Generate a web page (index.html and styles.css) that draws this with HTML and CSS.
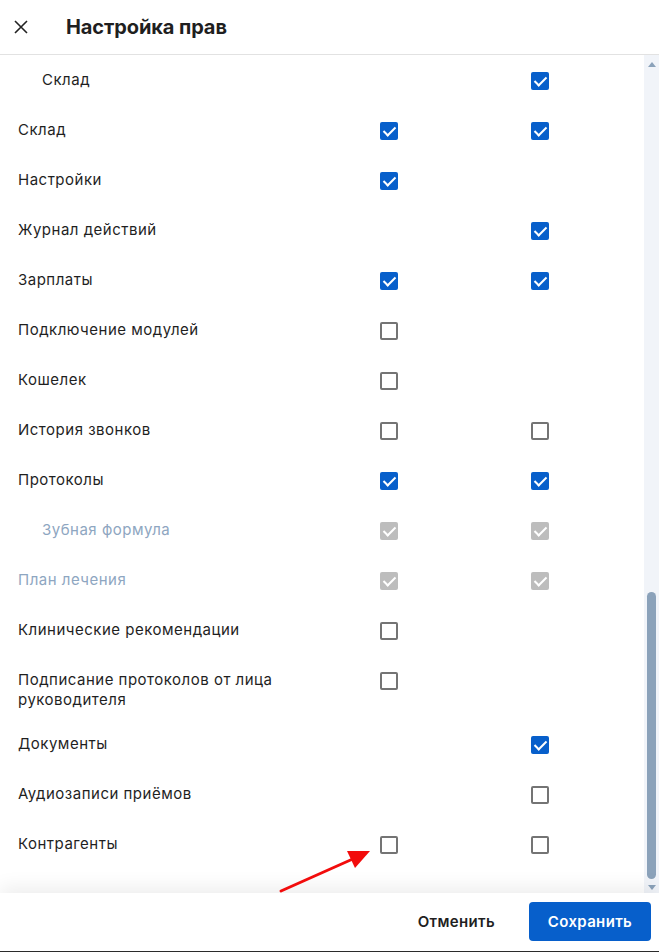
FILE: index.html
```html
<!DOCTYPE html>
<html lang="ru">
<head>
<meta charset="utf-8">
<link rel="stylesheet" href="styles.css">
</head>
<body>
<div class="modal">
  <header class="head">
    <svg class="close" width="16" height="16" viewBox="0 0 16 16"><path d="M2 2L14 14M14 2L2 14" stroke="#222" stroke-width="1.6" fill="none"/></svg>
    <h1 class="title">Настройка прав</h1>
  </header>
  <div class="body">
    <div class="list">
      <div class="row sub"><span class="label">Склад</span><span class="cell"></span><span class="cell"><i class="cb on"></i></span></div>
      <div class="row"><span class="label">Склад</span><span class="cell"><i class="cb on"></i></span><span class="cell"><i class="cb on"></i></span></div>
      <div class="row"><span class="label">Настройки</span><span class="cell"><i class="cb on"></i></span><span class="cell"></span></div>
      <div class="row"><span class="label">Журнал действий</span><span class="cell"></span><span class="cell"><i class="cb on"></i></span></div>
      <div class="row"><span class="label">Зарплаты</span><span class="cell"><i class="cb on"></i></span><span class="cell"><i class="cb on"></i></span></div>
      <div class="row"><span class="label">Подключение модулей</span><span class="cell"><i class="cb"></i></span><span class="cell"></span></div>
      <div class="row"><span class="label">Кошелек</span><span class="cell"><i class="cb"></i></span><span class="cell"></span></div>
      <div class="row"><span class="label">История звонков</span><span class="cell"><i class="cb"></i></span><span class="cell"><i class="cb"></i></span></div>
      <div class="row"><span class="label">Протоколы</span><span class="cell"><i class="cb on"></i></span><span class="cell"><i class="cb on"></i></span></div>
      <div class="row sub dis"><span class="label">Зубная формула</span><span class="cell"><i class="cb on off"></i></span><span class="cell"><i class="cb on off"></i></span></div>
      <div class="row dis"><span class="label">План лечения</span><span class="cell"><i class="cb on off"></i></span><span class="cell"><i class="cb on off"></i></span></div>
      <div class="row"><span class="label">Клинические рекомендации</span><span class="cell"><i class="cb"></i></span><span class="cell"></span></div>
      <div class="row"><span class="label">Подписание протоколов от лица руководителя</span><span class="cell"><i class="cb"></i></span><span class="cell"></span></div>
      <div class="row"><span class="label">Документы</span><span class="cell"></span><span class="cell"><i class="cb on"></i></span></div>
      <div class="row"><span class="label">Аудиозаписи приёмов</span><span class="cell"></span><span class="cell"><i class="cb"></i></span></div>
      <div class="row"><span class="label">Контрагенты</span><span class="cell"><i class="cb"></i></span><span class="cell"><i class="cb"></i></span></div>
    </div>
    <div class="scrollbar">
      <span class="arrow up"></span>
      <span class="thumb"></span>
      <span class="arrow down"></span>
    </div>
  </div>
  <footer class="foot">
    <button class="btn ghost">Отменить</button>
    <button class="btn primary">Сохранить</button>
  </footer>
  <svg class="pointer" width="120" height="70" viewBox="0 0 120 70"><line x1="6" y1="63" x2="80" y2="30" stroke="#f20c0c" stroke-width="3" stroke-linecap="round"/><polygon points="95,23 72,23 80,40" fill="#f20c0c"/></svg>
</div>
</body>
</html>
```
FILE: styles.css
```css
* { box-sizing: border-box; }
html, body { margin: 0; padding: 0; background: #fff; }
body {
  font-family: Inter, "Noto Sans", "Liberation Sans", sans-serif;
  color: #1f1f1f;
  font-size: 15px;
  line-height: 20px;
}
.modal {
  position: relative;
  width: 659px;
  height: 952px;
  display: flex;
  flex-direction: column;
  border-bottom: 1px solid #2b2b2b;
  overflow: hidden;
}
.head {
  height: 55px;
  flex: none;
  display: flex;
  align-items: center;
  border-bottom: 1px solid #e2e2e2;
  padding: 0 0 0 13px;
  gap: 37px;
}
.close { display: block; margin-top: 0; }
.title {
  margin: 0;
  font-size: 20px;
  font-weight: 700;
  line-height: 24px;
  color: #1f1f1f;
  letter-spacing: -0.1px;
}
.body {
  flex: 1;
  display: flex;
  min-height: 0;
}
.list {
  flex: 1;
  overflow: hidden;
  padding-left: 18px;
}
.row {
  display: grid;
  grid-template-columns: 362px 151px 1fr;
  min-height: 50px;
  padding: 15px 0 9px;
}
.label { padding-right: 60px; letter-spacing: 0.5px; }
.sub .label { padding-left: 24px; }
.dis .label { color: #8ea6c1; }
.cell {
  height: 20px;
  display: flex;
  align-items: center;
}
.cb {
  display: block;
  width: 18px;
  height: 18px;
  border: 2px solid #747474;
  border-radius: 2px;
  margin-top: 2px;
  position: relative;
}
.cb.on {
  border: none;
  background: #075fcb;
}
.cb.on::after {
  content: "";
  position: absolute;
  left: 6px;
  top: 2px;
  width: 5px;
  height: 10px;
  border-right: 2px solid #fff;
  border-bottom: 2px solid #fff;
  transform: rotate(45deg);
}
.cb.off { background: #bdbdbd; }
.scrollbar {
  flex: none;
  width: 15px;
  background: #f1f4f9;
  display: flex;
  flex-direction: column;
  align-items: center;
  padding: 7px 0 3px;
}
.arrow {
  width: 0; height: 0;
  border-left: 4px solid transparent;
  border-right: 4px solid transparent;
}
.arrow.up { border-bottom: 5px solid #8ba2ba; }
.arrow.down { border-top: 5px solid #8ba2ba; margin-top: 6px; }
.thumb {
  margin-top: auto;
  width: 9px;
  height: 287px;
  background: #8ba2ba;
  border-radius: 5px;
}
.foot {
  flex: none;
  height: 58px;
  display: flex;
  justify-content: flex-end;
  align-items: center;
  gap: 18px;
  padding: 0 8px 1px 0;
  background: #fff;
  box-shadow: 0 -6px 18px rgba(0, 0, 0, 0.07);
  position: relative;
}
.btn {
  font-family: inherit;
  font-size: 15px;
  font-weight: 600;
  letter-spacing: 0.35px;
  border: none;
  height: 39px;
  border-radius: 4px;
  cursor: pointer;
}
.ghost { background: transparent; color: #1f1f1f; padding: 0 16px; }
.primary { background: #075fcb; color: #fff; width: 122px; }
.pointer {
  position: absolute;
  left: 275px;
  top: 828px;
}
```
